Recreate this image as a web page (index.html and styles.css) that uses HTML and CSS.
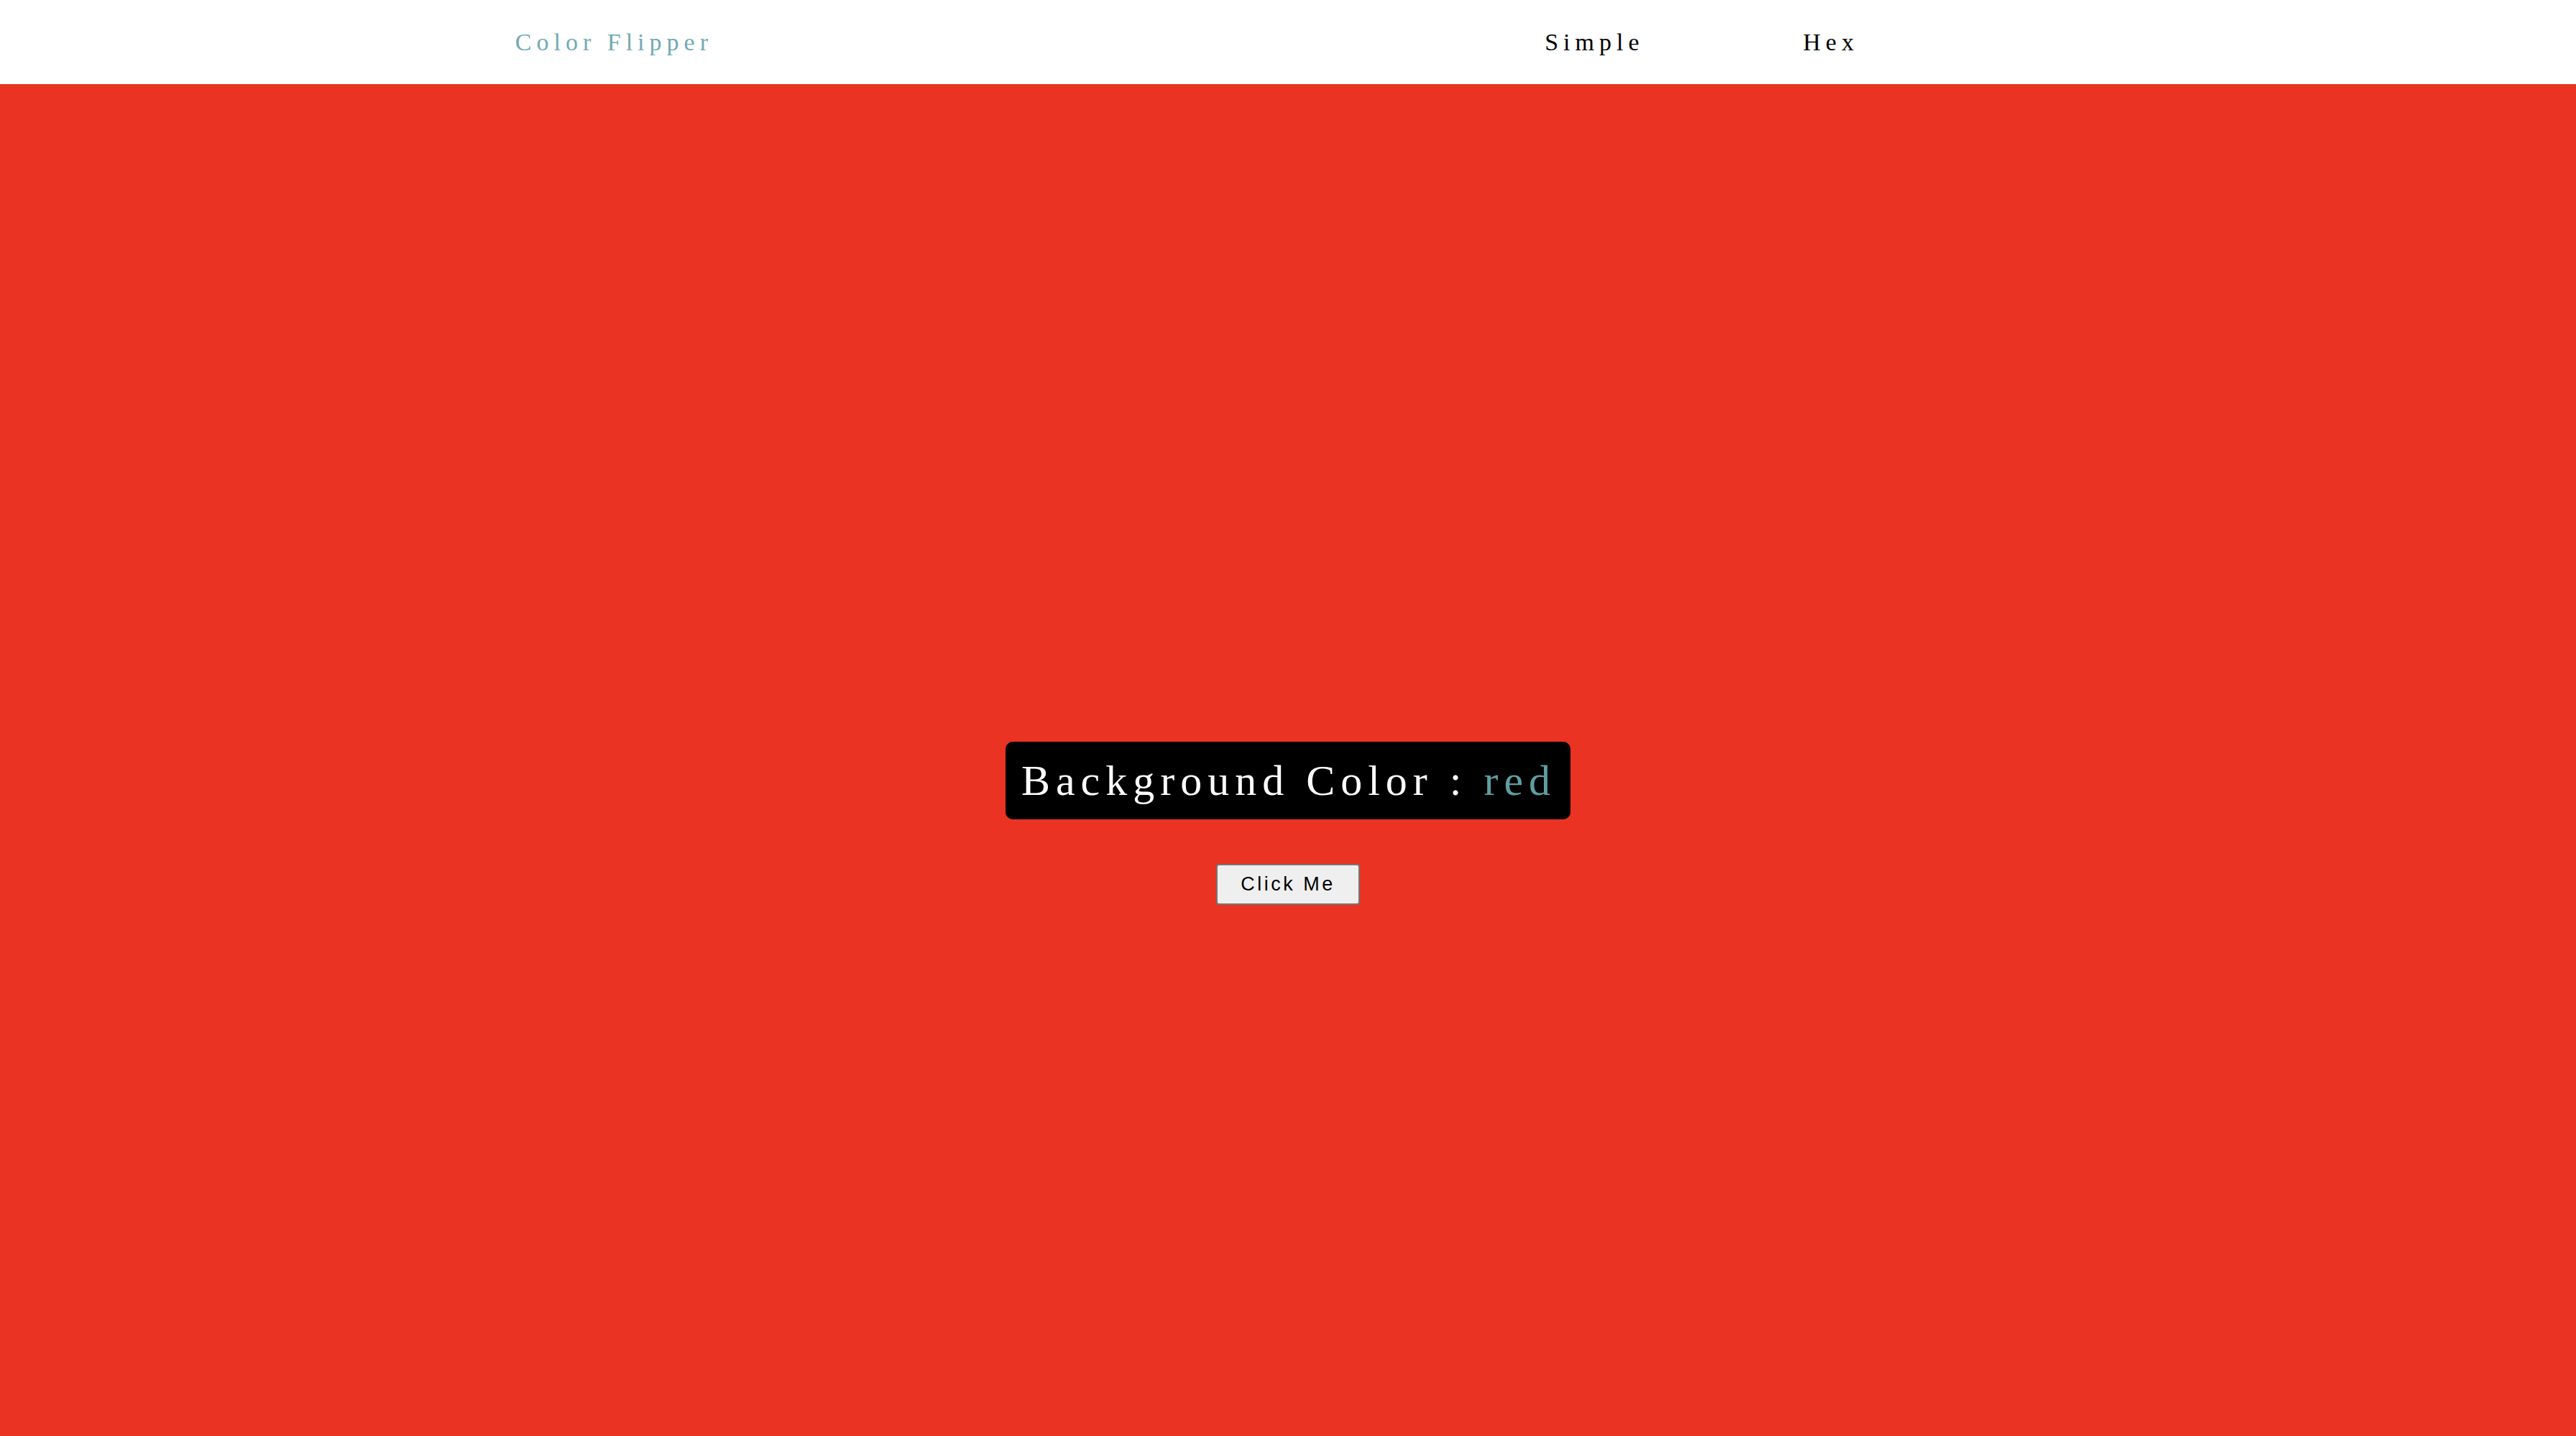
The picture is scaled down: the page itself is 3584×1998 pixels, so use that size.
FILE: index.html
```html
<!DOCTYPE html>
<html lang="en">
<head>
<meta charset="utf-8">
<title>Color Flipper</title>
<link rel="stylesheet" href="styles.css">
</head>
<body>
<nav class="nav">
  <div class="nav-center">
    <h4 class="logo">Color Flipper</h4>
    <ul class="nav-links">
      <li><a href="#" class="nav-link">Simple</a></li>
      <li><a href="#" class="nav-link">Hex</a></li>
    </ul>
  </div>
</nav>
<main class="main">
  <div class="container">
    <h2 class="title">Background Color : <span class="color">red</span></h2>
    <button class="btn" type="button">Click Me</button>
  </div>
</main>
</body>
</html>
```
FILE: styles.css
```css
* {
  box-sizing: border-box;
}

html, body {
  margin: 0;
  padding: 0;
}

body {
  font-family: "Liberation Serif", "Times New Roman", serif;
  background: #ea3323;
}

.nav {
  background: #ffffff;
  height: 117px;
  display: flex;
  align-items: center;
}

.nav-center {
  width: 60%;
  margin: 0 auto;
  display: flex;
  align-items: center;
}

.logo {
  margin: 0;
  font-weight: normal;
  font-size: 34px;
  letter-spacing: 7px;
  color: #72aab0;
}

.nav-links {
  list-style: none;
  margin: 0 281px 0 auto;
  padding: 0;
  display: flex;
  gap: 221px;
}

.nav-link {
  text-decoration: none;
  color: #000000;
  font-size: 34px;
  letter-spacing: 7px;
}

.main {
  min-height: calc(100vh - 117px);
  display: flex;
  justify-content: center;
  padding-top: 915px;
}

.container {
  display: flex;
  flex-direction: column;
  align-items: center;
  gap: 62px;
}

.title {
  margin: 0;
  background: #000000;
  color: #ffffff;
  font-weight: normal;
  font-size: 60px;
  letter-spacing: 8px;
  line-height: 108px;
  height: 108px;
  padding: 0 20px 0 22px;
  border-radius: 10px;
}

.color {
  color: #5f9ea0;
}

.btn {
  width: 200px;
  height: 57px;
  font-family: "Liberation Sans", Arial, sans-serif;
  font-size: 27px;
  letter-spacing: 3.5px;
  color: #000000;
  background: #efefef;
  border: 2px solid #767676;
  border-radius: 4px;
  padding: 0;
}
```
